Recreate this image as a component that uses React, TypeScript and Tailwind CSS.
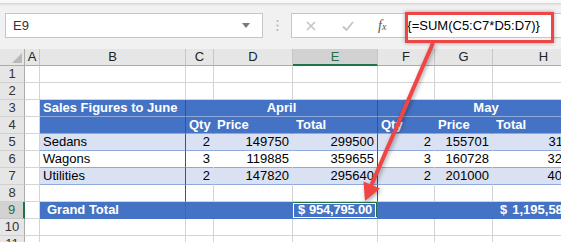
import React from 'react';

type Cell = {
    text?: React.ReactNode;
    span?: number;
    cls: string;
    selected?: boolean;
};

const COLS = ['A', 'B', 'C', 'D', 'E', 'F', 'G', 'H'];

const base = 'h-[17px] flex items-center overflow-hidden whitespace-nowrap border-r border-b px-[3px]';
const plain = 'bg-white border-[#d4d4d4]';
const blue = 'bg-[#4472c4] border-r-[#4472c4] border-b-[#8ea9db] text-white font-bold';
const blueDiv = 'bg-[#4472c4] border-r-[#305496] border-b-[#8ea9db] text-white font-bold';
const band = 'bg-[#d9e1f2] border-r-[#d9e1f2] border-b-[#8ea9db]';
const bandDiv = 'bg-[#d9e1f2] border-r-[#305496] border-b-[#8ea9db]';
const white = 'bg-white border-r-white border-b-[#8ea9db]';
const whiteDiv = 'bg-white border-r-[#305496] border-b-[#8ea9db]';

const data: Record<number, (string | number)[]> = {
    5: ['Sedans', 2, 149750, 299500, 2, 155701, 311402],
    6: ['Wagons', 3, 119885, 359655, 3, 160728, 321456],
    7: ['Utilities', 2, 147820, 295640, 2, 201000, 402000],
};

function rowCells(r: number): Cell[] {
    const a: Cell = { cls: plain };
    if (r === 3) {
        return [
            a,
            { text: 'Sales Figures to June', cls: blueDiv },
            { text: 'April', span: 3, cls: `${blueDiv} justify-center` },
            { text: 'May', span: 3, cls: `${blue} justify-center` },
        ];
    }
    if (r === 4) {
        return [
            a,
            { cls: blueDiv },
            { text: 'Qty', cls: blue },
            { text: 'Price', cls: blue },
            { text: 'Total', cls: blueDiv },
            { text: 'Qty', cls: blue },
            { text: 'Price', cls: blue },
            { text: 'Total', cls: blue },
        ];
    }
    if (data[r]) {
        const d = data[r];
        const odd = r !== 6;
        const bg = odd ? band : white;
        const div = odd ? bandDiv : whiteDiv;
        return [
            a,
            { text: d[0], cls: div },
            ...d.slice(1).map((v, i) => ({
                text: v,
                cls: `${i === 2 ? div : bg} justify-end`,
            })),
        ];
    }
    if (r === 8) {
        return COLS.map((c) => ({
            cls: c === 'B' || c === 'E' ? 'bg-white border-b-[#d4d4d4] border-r-[#305496]' : plain,
        }));
    }
    if (r === 9) {
        const g = 'bg-[#4472c4] border-[#4472c4] text-white font-bold';
        return [
            a,
            { text: 'Grand Total', cls: `${g} pl-[7px] border-r-[#3d67b4]` },
            { cls: g },
            { cls: g },
            {
                text: (
                    <span className="flex w-full justify-between px-[2px] tracking-[-0.2px]">
                        <span>$</span>
                        <span>954,795.00</span>
                    </span>
                ),
                cls: `${g} relative`,
                selected: true,
            },
            { cls: g },
            { cls: g },
            {
                text: (
                    <span className="flex pl-[4px] gap-[5px]">
                        <span>$</span>
                        <span>1,195,586.00</span>
                    </span>
                ),
                cls: g,
            },
        ];
    }
    return COLS.map(() => ({ cls: plain }));
}

function FormulaBar() {
    return (
        <div className="h-[49px] bg-[#f1f1f1] relative">
            <div className="h-[4px] bg-[#f8f8f8] border-b border-[#d9d9d9] shadow-[0_1px_2px_rgba(0,0,0,0.08)]" />
            <div className="flex items-center mt-[9px]">
                <div className="ml-[5px] w-[258px] h-[25px] bg-white border border-[#c6c6c6] flex items-center justify-between pl-[7px] pr-[12px] text-[13px] text-[#333]">
                    <span>E9</span>
                    <svg width="8" height="5" viewBox="0 0 8 5">
                        <polygon points="0,0 8,0 4,5" fill="#7a7a7a" />
                    </svg>
                </div>
                <svg className="ml-[13px]" width="3" height="13" viewBox="0 0 3 13">
                    <circle cx="1.5" cy="2" r="1.1" fill="#b4b4b4" />
                    <circle cx="1.5" cy="6.5" r="1.1" fill="#b4b4b4" />
                    <circle cx="1.5" cy="11" r="1.1" fill="#b4b4b4" />
                </svg>
                <div className="ml-[12px] flex-1 h-[25px] bg-white border border-r-0 border-[#c6c6c6] relative flex items-center">
                    <svg className="ml-[14px]" width="10" height="10" viewBox="0 0 10 10">
                        <path d="M1 1 L9 9 M9 1 L1 9" stroke="#c4c4c4" strokeWidth="1.6" />
                    </svg>
                    <svg className="ml-[26px]" width="12" height="10" viewBox="0 0 12 10">
                        <path d="M1 5.5 L4.5 9 L11 1" stroke="#c4c4c4" strokeWidth="1.8" fill="none" />
                    </svg>
                    <span className="ml-[24px] text-[14px] text-[#555] italic font-['Liberation_Serif',serif] leading-none">
                        f<span className="text-[10px]">x</span>
                    </span>
                    <span className="ml-[21px] text-[13px] text-black">{'{=SUM(C5:C7*D5:D7)}'}</span>
                    <div className="absolute left-[113px] top-[-2px] w-[149px] h-[31px] border-[3px] border-[#f04545] shadow-[0_0_4px_rgba(0,0,0,0.35)]" />
                </div>
            </div>
        </div>
    );
}

function Sheet() {
    const rows = Array.from({ length: 11 }, (_, i) => i + 1);
    return (
        <div className="grid grid-cols-[25px_15px_146px_28px_79px_85px_57px_58px_102px] text-[13px] text-black">
            <div className="h-[17px] bg-[#e6e6e6] border-r border-b border-[#ababab] relative">
                <svg className="absolute right-[2px] bottom-[2px]" width="10" height="10" viewBox="0 0 10 10">
                    <polygon points="10,0 10,10 0,10" fill="#b9b9b9" />
                </svg>
            </div>
            {COLS.map((c) => (
                <div
                    key={c}
                    className={
                        c === 'E'
                            ? 'h-[17px] bg-[#d2d2d2] text-[#217346] border-r border-r-[#c6c6c6] border-b-2 border-b-[#217346] flex items-center justify-center'
                            : 'h-[17px] bg-[#e6e6e6] text-[#222] border-r border-r-[#c6c6c6] border-b border-b-[#ababab] flex items-center justify-center'
                    }
                >
                    {c}
                </div>
            ))}
            {rows.map((r) => (
                <React.Fragment key={r}>
                    <div
                        className={
                            r === 9
                                ? 'h-[17px] bg-[#d2d2d2] text-[#217346] border-b border-b-[#c6c6c6] border-r-2 border-r-[#217346] flex items-center justify-center'
                                : 'h-[17px] bg-[#e6e6e6] text-[#333] border-b border-b-[#d0d0d0] border-r border-r-[#ababab] flex items-center justify-center'
                        }
                    >
                        {r}
                    </div>
                    {rowCells(r).map((c, i) => (
                        <div
                            key={i}
                            className={`${base} ${c.cls} ${c.span === 3 ? 'col-span-3' : ''}`}
                        >
                            {c.text}
                            {c.selected && (
                                <>
                                    <div className="absolute left-[-2px] top-[-1px] right-[-1px] bottom-[-2px] border-2 border-[#217346]">
                                        <div className="w-full h-full border border-white" />
                                    </div>
                                    <div className="absolute right-[-4px] bottom-[-5px] w-[6px] h-[6px] bg-[#217346] border border-white" />
                                </>
                            )}
                        </div>
                    ))}
                </React.Fragment>
            ))}
        </div>
    );
}

export default function App() {
    return (
        <div className="w-[561px] h-[242px] overflow-hidden relative bg-[#f1f1f1] font-['Liberation_Sans',Arial,sans-serif]">
            <FormulaBar />
            <Sheet />
            {/* callout arrow from the formula to E9 */}
            <svg
                className="absolute inset-0 pointer-events-none drop-shadow-[1px_2px_2px_rgba(0,0,0,0.35)]"
                width="561"
                height="242"
                viewBox="0 0 561 242"
            >
                <line x1="433" y1="43" x2="371" y2="186" stroke="#f04545" strokeWidth="4" />
                <polygon points="365,201 363.5,181.5 380,188.5" fill="#f04545" />
            </svg>
        </div>
    );
}
